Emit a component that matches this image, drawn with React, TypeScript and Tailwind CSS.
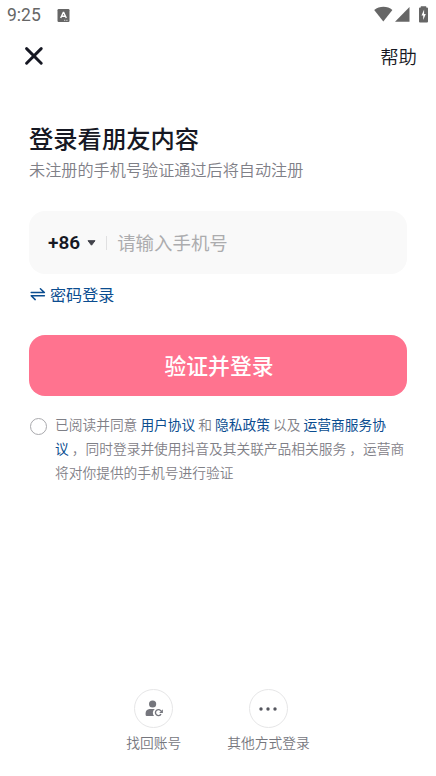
import { useState } from 'react';

const TERMS_LINK = 'font-normal text-[#0b4d90]';

function StatusBar() {
    return (
        <div className="flex h-[30px] items-center justify-between pl-[7px] pr-2 text-[#666666]">
            <div className="flex items-center gap-4">
                <span className="font-[Roboto,sans-serif] text-[17.5px] leading-[30px]">9:25</span>
                <svg width="13" height="13" viewBox="0 0 12 13">
                    <rect width="12" height="13" rx="1.2" fill="currentColor" />
                    <path d="M3.2 9 5.8 3.4h.4L8.8 9M4.3 7.3h3.4" fill="none" stroke="#fff" strokeWidth="1.4" />
                    <path d="M6.6 11.3h1.2M8.8 11.3H10" stroke="#fff" strokeWidth=".8" />
                </svg>
            </div>
            <div className="flex items-center pb-[2px]">
                <svg width="19" height="16" viewBox="0 0 19 16">
                    <path d="M0.2 4C5.5-.2 13.5-.2 18.4 4L9.3 15.4Z" fill="currentColor" />
                </svg>
                <svg className="ml-[2px]" width="15" height="16" viewBox="0 0 15 16">
                    <path d="M14.5 1v14.7H0Z" fill="currentColor" />
                </svg>
                <svg className="ml-[9px]" width="9" height="17" viewBox="0 0 9 17">
                    <path d="M1.8 1.4V.3h5.4v1.1H8a1 1 0 0 1 1 1v13.2a1 1 0 0 1-1 1H1a1 1 0 0 1-1-1V2.400a1 1 0 0 1 1-1Z" fill="currentColor" />
                    <path d="M5.1 3.6 2.500 9.400h1.700V14l2.600-5.900H5.100Z" fill="#fff" />
                </svg>
            </div>
        </div>
    );
}

export default function App() {
    const [phone, setPhone] = useState('');
    const [agreed, setAgreed] = useState(false);

    return (
        <div className="flex h-[776px] w-[436px] flex-col overflow-hidden bg-white font-['Noto_Sans_CJK_SC',sans-serif] text-[#161823]">
            <StatusBar />

            <header className="flex h-[52px] items-center justify-between pl-[25px] pr-[19px]">
                <button aria-label="关闭">
                    <svg width="18" height="18" viewBox="0 0 18 18" fill="none" stroke="currentColor" strokeWidth="2.9" strokeLinecap="round">
                        <path d="M1.6 1.6l14.6 14.6M16.2 1.6L1.6 16.2" />
                    </svg>
                </button>
                <button className="text-[18.4px] font-[350] leading-6">帮助</button>
            </header>

            <main className="px-[29px] pt-[38px]">
                <h1 className="text-[24.3px] font-medium leading-9">登录看朋友内容</h1>
                <p className="mt-[1px] text-[16.15px] leading-6 font-[350] text-[#7f8087]">未注册的手机号验证通过后将自动注册</p>

                <div className="mt-[30px] flex h-[63px] items-center rounded-2xl bg-[#f9f9f9] pl-[19px]">
                    <span className="pt-[2px] font-[Roboto,sans-serif] text-[19px] font-semibold">+86</span>
                    <svg className="ml-[7px]" width="9" height="6" viewBox="0 0 9 6">
                        <path d="M1 .7h7L4.5 5.2Z" fill="#42434a" stroke="#42434a" strokeLinejoin="round" />
                    </svg>
                    <span className="ml-[10px] h-[14px] w-px bg-[#e0e0e1]" />
                    <input
                        type="tel"
                        placeholder="请输入手机号"
                        className="ml-[10px] w-[260px] bg-transparent text-[18.45px] outline-none placeholder:text-[#acacae]"
                        value={phone}
                        onChange={e => setPhone(e.target.value)}
                    />
                </div>

                <button className="mt-[8px] flex h-6 items-center text-[16.1px] text-[#0b4d90]">
                    <svg className="mr-[4px] ml-[1px]" width="16" height="14" viewBox="0 0 16 14" fill="none" stroke="currentColor" strokeWidth="1.5" strokeLinecap="round" strokeLinejoin="round">
                        <path d="M1.2 5.600h13.200L10.400 1.800M14.400 8.700H1.200l4 3.900" />
                    </svg>
                    密码登录
                </button>

                <button className="mt-[29px] flex h-[61px] w-full items-center justify-center rounded-2xl bg-[#ff738f] pb-px pl-[2px] text-[21.8px] font-medium text-white">
                    验证并登录
                </button>

                <div className="mt-[16px] flex items-start">
                    <button
                        aria-label="同意协议"
                        onClick={() => setAgreed(!agreed)}
                        className={`mt-[6px] ml-[1px] mr-[8px] size-[17px] shrink-0 rounded-full border ${agreed ? 'border-[#ff738f] bg-[#ff738f]' : 'border-[#a9a9ad]'}`}
                    />
                    <p className="whitespace-nowrap text-[13.73px] leading-[24.2px] font-[350] text-[#7f8087]">
                        已阅读并同意 <a className={TERMS_LINK}>用户协议</a> 和 <a className={TERMS_LINK}>隐私政策</a> 以及 <a className={TERMS_LINK}>运营商服务协<br />议</a> ，同时登录并使用抖音及其关联产品相关服务 ，运营商<br />
                        将对你提供的手机号进行验证
                    </p>
                </div>
            </main>

            <footer className="mt-auto flex justify-center gap-[46px] pb-[24px] text-[13.75px] font-[350] leading-5 text-[#75767d]">
                <button className="flex flex-col items-center">
                    <span className="mb-[4px] flex size-[39px] items-center justify-center rounded-full border border-[#e6e6e7]">
                        <svg width="18" height="17" viewBox="0 0 18 17" fill="#75767d">
                            <circle cx="7.6" cy="4" r="3.6" />
                            <path d="M4.6 9h5.200A4.800 4.800 0 0 0 9 16H1.800Q.600 16 .600 14.700V13Q.800 9.400 4.600 9Z" />
                            <path d="M16 14.2a3 3 0 1 1 .1-3" fill="none" stroke="#75767d" strokeWidth="1.4" />
                            <path d="M17.9 9.3v3.7h-3.7Z" />
                        </svg>
                    </span>
                    找回账号
                </button>
                <button className="flex flex-col items-center">
                    <span className="mb-[4px] flex size-[39px] items-center justify-center rounded-full border border-[#e6e6e7]">
                        <svg className="-ml-px" width="18" height="4" viewBox="0 0 18 4" fill="#55565e">
                            <circle cx="2" cy="2" r="1.7" />
                            <circle cx="9" cy="2" r="1.7" />
                            <circle cx="16" cy="2" r="1.7" />
                        </svg>
                    </span>
                    其他方式登录
                </button>
            </footer>
        </div>
    );
}
